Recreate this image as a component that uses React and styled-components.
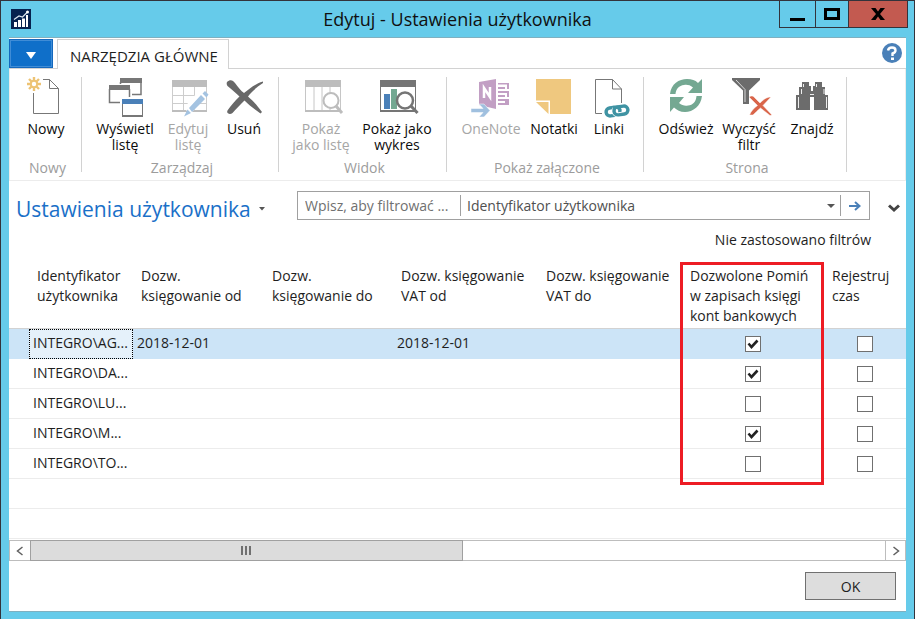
import React, { useState } from "react";
import styled, { createGlobalStyle } from "styled-components";

const Global = createGlobalStyle`
  * { box-sizing: border-box; }
  body { margin: 0; background: #66cbea; }
  body, button, input, select {
    font-family: "Open Sans", "Noto Sans", sans-serif;
    font-size: 14px;
    color: #1e1e1e;
  }
  button { cursor: pointer; }
`;

const Window = styled.div`
  min-height: 100vh;
  display: flex;
  flex-direction: column;
  padding: 0 8px 8px;
  background: #66cbea;
  border: 1px solid #33333b;
`;

const TitleBar = styled.header`
  display: grid;
  grid-template-columns: 127px 1fr 127px;
  height: 37px;
  border-bottom: 1px solid #7fb0c0;
`;

const AppLogo = styled.svg`
  margin: 8px 0 0 2px;
`;

const WindowTitle = styled.h1`
  margin: 0;
  text-align: center;
  font-size: 18px;
  font-weight: 400;
  line-height: 36px;
  color: #101010;
  white-space: nowrap;
`;

const WindowButtons = styled.div`
  display: flex;
  align-items: flex-start;
  margin-right: -2px;
`;

const WindowButton = styled.button`
  display: grid;
  place-items: center;
  flex: ${(p) => p.$grow} 1 0;
  height: 27px;
  padding: 0;
  border: 1px solid #33333b;
  border-width: 0 0 1px 1px;
  border-right-width: ${(p) => (p.$danger ? "1px" : 0)};
  background: ${(p) => (p.$danger ? "#c35a50" : "transparent")};
`;

const Client = styled.main`
  flex: 1;
  display: flex;
  flex-direction: column;
  background: #fff;
  border-bottom: 1px solid #7fb0c0;
`;

const TabStrip = styled.nav`
  display: flex;
  align-items: flex-start;
  height: 31px;
  padding-top: 1px;
  border-bottom: 1px solid #d2d2d2;
`;

const FileButton = styled.button`
  width: 44px;
  height: 29px;
  padding: 0;
  border: 1px solid #1468bd;
  background: #0f6fc9;
  box-shadow: inset 0 0 0 1px #3f8cd6;
`;

const RibbonTab = styled.button`
  height: 30px;
  margin-left: 4px;
  padding: 0 10px 0 12px;
  border: 1px solid #d2d2d2;
  border-bottom: 0;
  background: #fff;
  font-size: 15px;
  line-height: 32px;
  white-space: nowrap;
`;

const HelpButton = styled.button`
  margin: 4px 4px 0 auto;
  padding: 0;
  border: 0;
  background: none;
  height: 20px;
`;

const Ribbon = styled.section`
  display: flex;
  padding: 8px 0;
  border: 1px solid #ececec;
  border-top: 0;
`;

const RibbonGroup = styled.div`
  width: ${(p) => p.$width}px;
  height: 95px;
  display: flex;
  flex-direction: column;
  justify-content: space-between;
  border-right: 1px solid #d2d2d2;
`;

const GroupItems = styled.div`
  display: flex;
  padding-left: ${(p) => p.$indent}px;
`;

const GroupLabel = styled.div`
  margin-bottom: -6px;
  padding-left: 4px;
  text-align: center;
  line-height: 20px;
  color: #9c9c9c;
`;

const RibbonButton = styled.button`
  display: flex;
  flex-direction: column;
  align-items: center;
  width: ${(p) => p.$width}px;
  padding: 0;
  border: 0;
  background: none;
  color: #0c0c0c;
  line-height: 16px;

  &:disabled { color: #a6a6a6; cursor: default; }
`;

const RibbonIcon = styled.svg`
  width: 40px;
  height: 40px;
  margin-bottom: 4px;
  overflow: visible;
`;

const RibbonText = styled.span`
  white-space: pre;
  text-align: center;
`;

const PageHead = styled.div`
  display: flex;
  align-items: flex-start;
  padding: 10px 0 0 7px;
`;

const PageTitle = styled.h2`
  flex: 1;
  display: flex;
  align-items: center;
  gap: 8px;
  margin: 0;
  font-size: 21px;
  font-weight: 400;
  line-height: 36px;
  color: #1a70c8;
  white-space: nowrap;
`;

const FilterBox = styled.form`
  flex: 0 0 573px;
  display: flex;
  align-items: center;
  height: 29px;
  border: 1px solid #a0a0a0;
`;

const FilterInput = styled.input`
  width: 162px;
  height: 27px;
  padding: 0 7px;
  border: 0;
  background: none;
  &::placeholder { color: #707070; opacity: 1; }
`;

const FilterField = styled.div`
  flex: 1;
  display: flex;
  align-items: center;
  height: 21px;
  padding-right: 5px;
  border-left: 1px solid #a0a0a0;
  border-right: 1px solid #a0a0a0;
`;

const FieldSelect = styled.select`
  flex: 1;
  appearance: none;
  padding: 0 6px;
  border: 0;
  background: none;
  color: #505050;
`;

const IconButton = styled.button`
  display: grid;
  place-items: center;
  width: 28px;
  height: 27px;
  padding: 0;
  border: 0;
  background: none;
`;

const ExpandButton = styled(IconButton)`
  width: 24px;
  margin: 4px 0 0 12px;
`;

const FilterStatus = styled.p`
  margin: 0;
  padding: 3px 35px 12px 0;
  text-align: right;
  line-height: 20px;
`;

const Grid = styled.table`
  width: 100%;
  table-layout: fixed;
  border-collapse: separate;
  border-spacing: 0;
`;

const Col = styled.col`
  width: ${(p) => (p.$width ? `${p.$width}px` : "auto")};
`;

const HeadCell = styled.th`
  position: relative;
  padding: 4px 0 2px 8px;
  border-bottom: 1px solid #d2d2d2;
  text-align: left;
  vertical-align: top;
  font-weight: 400;
  line-height: 20px;
  white-space: pre;
`;

const Highlight = styled.span`
  position: absolute;
  top: 0;
  left: -2px;
  right: 0;
  height: calc(100% + 157px);
  border: 3px solid #ed1c24;
  pointer-events: none;
  z-index: 1;
`;

const Row = styled.tr`
  background: ${(p) => (p.$selected ? "#cce4f7" : "#fff")};
`;

const Cell = styled.td`
  height: 30px;
  padding: ${(p) => (p.$center ? "0" : "0 0 2px 4px")};
  border-bottom: 1px solid ${(p) => (p.$selected ? "#cce4f7" : "#ececec")};
  text-align: ${(p) => (p.$center ? "center" : "left")};
  line-height: 20px;
  white-space: nowrap;
`;

const FocusCell = styled(Cell)`
  background: #e5f1fa;
  outline: 1px dotted #000;
  outline-offset: -1px;
`;

const CheckBox = styled.input`
  appearance: none;
  display: block;
  width: 16px;
  height: 16px;
  margin: 0 auto;
  border: 1px solid #707070;
  background: #fff;

  &:checked {
    background: #fff url("data:image/svg+xml,%3Csvg xmlns='http://www.w3.org/2000/svg' viewBox='0 0 14 14'%3E%3Cpath d='M2.5 6.5L5.5 10L11.5 3.5' fill='none' stroke='%23222' stroke-width='2.6'/%3E%3C/svg%3E");
  }
`;

const ScrollBar = styled.div`
  display: flex;
  height: 21px;
  margin-top: 1px;
  border: 1px solid #bdbdbd;
`;

const ScrollArrow = styled.button`
  display: grid;
  place-items: center;
  width: 20px;
  padding: 0;
  border: 0;
  background: #fff;
  border-left: ${(p) => (p.$end ? "1px solid #bdbdbd" : 0)};
`;

const ScrollTrack = styled.div`
  flex: 1;
  margin: -1px 0;
`;

const ScrollThumb = styled.div`
  display: grid;
  place-items: center;
  width: 50.6%;
  height: 21px;
  border: 1px solid #a0a0a0;
  background: #dcdcdc;
`;

const Footer = styled.footer`
  display: flex;
  justify-content: flex-end;
  padding: 11px 10px;
`;

const OkButton = styled.button`
  width: 91px;
  height: 28px;
  padding: 0;
  border: 1px solid #707070;
  background: #dddddd;
`;

const G = "#777777";

const icons = {
  fresh: (
    <>
      <path d="M17 2.5H23.5L32.5 11.5V36.5H7.5V16M23.5 2.5V11.5H32.5" fill="none" stroke={G} />
      <path d="M8 0V14M1 7H15M3 2L13 12M13 2L3 12" stroke="#edc374" strokeWidth="2.4" />
      <circle cx="8" cy="7" r="3.2" fill="#fff" stroke="#edc374" strokeWidth="2" />
    </>
  ),
  view: (
    <>
      <path d="M15 1H37V6H15zM4 8H25V13H4z" fill={G} />
      <path d="M15.5 5V7M36 5V17.5H27M4.5 12V25.5H15M24.5 12V20" fill="none" stroke={G} strokeWidth="1.5" />
      <path d="M17.5 26V39H37.5V26" fill="#fff" stroke={G} />
      <path d="M17 39H38" stroke={G} strokeWidth="2" />
      <path d="M17 22H38V27H17z" fill="#4a80b8" />
    </>
  ),
  edit: (
    <>
      <path d="M4 3H39V10H4z" fill="#bdbdbd" />
      <path d="M4.5 10V34M15.5 10V34M26.5 10V34M38.5 10V34M4 18.5H39M4 26.5H39" stroke="#cdcdcd" />
      <path d="M4 34H39" stroke="#bdbdbd" strokeWidth="2" />
      <path d="M19 34L35 16" stroke="#fff" strokeWidth="9" />
      <path d="M21 31L33 18L37 22L24 35zM34.5 16.5L37 14L40.5 17.5L38.5 20.5zM19.5 32.5L23 36L16 39.5z" fill="#a4c3e1" />
    </>
  ),
  remove: (
    <path
      d="M3 5C6 2 9 3 11 6C14 10 17 14 20 16C26 11 31 7 39 4.500V6C33 10 28 14 24 19.500C29 24 33 28 38 35L36.500 36.500C30 32 25 28 20.500 23.500C16 28 12 32 8.500 36C6 38 2 36.500 3.500 33.500C7 28 11 24 15.500 19.500C11 15 7 12 3.500 9C2.500 8 2.500 6 3 5z"
      fill="#686868"
    />
  ),
  listView: (
    <>
      <path d="M4 3H40V10H4z" fill="#bdbdbd" />
      <path d="M4.5 10V34M39.5 10V34M13 10V33M21 10V33M29 10V33" stroke="#c6c6c6" />
      <path d="M4 34H40" stroke="#bdbdbd" strokeWidth="2" />
      <circle cx="30" cy="23.5" r="7.5" fill="#fff" stroke="#bdbdbd" strokeWidth="2" />
      <path d="M35 29L41 36" stroke="#bdbdbd" strokeWidth="3" />
    </>
  ),
  chartView: (
    <>
      <path d="M3 3H39V10H3z" fill="#757575" />
      <path d="M3.5 10V34M38.5 10V34" stroke={G} />
      <path d="M3 34H39" stroke="#757575" strokeWidth="2" />
      <path d="M7 17H13V32H7z" fill="#4a80b8" />
      <path d="M14 12H20V32H14z" fill="#74a892" />
      <circle cx="28" cy="23.5" r="8" fill="#fff" fillOpacity="0.9" stroke="#757575" strokeWidth="2.5" />
      <path d="M34 29L40.5 36" stroke="#757575" strokeWidth="3" />
    </>
  ),
  oneNote: (
    <>
      <path d="M8 5L25 2V32L8 28z" fill="#c29fc4" />
      <path d="M13 21V11L19 20V10" fill="none" stroke="#fff" strokeWidth="2.5" />
      <path d="M27 6H38V12H36V7.5H27zM27 10H34V12H27zM27 14H38V20H36V16H27zM27 18H34V20H27zM27 22H38V28H27V26H34V24H27z" fill="#c29fc4" />
      <path d="M0 31.5H12L8 27H13L19 33.5L13 40H8L12 35.5H0z" fill="#a0c0df" stroke="#fff" strokeWidth="0.5" />
    </>
  ),
  note: (
    <>
      <path d="M2 2H37V37H16V23.5H2z" fill="#efc87f" />
      <path d="M2 25H14.5V37z" fill="#efc87f" />
    </>
  ),
  link: (
    <>
      <path d="M13 36.5H6.5V2.5H23.5L32.5 12V26M23.5 2.5V12H32.5" fill="none" stroke={G} />
      <g transform="rotate(-8 28 34)" fill="none">
        <rect x="17" y="30" width="14" height="8" rx="4" stroke="#3f93a3" strokeWidth="3.4" />
        <rect x="25" y="30" width="14" height="8" rx="4" stroke="#fff" strokeWidth="5" />
        <rect x="25" y="30" width="14" height="8" rx="4" stroke="#3f93a3" strokeWidth="3.4" />
        <path d="M24 30H27Q31 30 31 33.5" stroke="#3f93a3" strokeWidth="3.4" />
      </g>
    </>
  ),
  refresh: (
    <g fill="#74a892">
      <path d="M4 17C5 7 13 2 21 2C26 2 29 3 32 6L36 2V16H22L27 10.5C24 8 21 7.5 18 8C13 8.5 10 12 9.5 17z" />
      <path d="M36 19C35 29 27 35 19 35C14 35 11 33 8 30.5L4 35V20H18L13 26C16 28.5 19 29 22 28.5C27 28 30 25 30.5 19z" />
    </g>
  ),
  clear: (
    <>
      <path d="M3 1H31V3L20 13.5V27H14V13.5L3 3z" fill="#6c6c6c" />
      <path d="M7 3L16 12.500V25" fill="none" stroke="#d8d8d8" strokeWidth="1" />
      <path
        d="M20 20C22 18.500 24 18.500 25 20L31 26C35 22 38 20 42 20L34 28.500L43 38L41 38.500L31.500 31C28 34 26 36 24 38H20.500C22 34 25 31 28.500 28.500z"
        fill="#d9654a"
        stroke="#fff"
        strokeWidth="0.5"
      />
    </>
  ),
  find: (
    <>
      <path d="M10 5H17V9H19V14H21V9H23V5H30V10H33V18H36V33H22V20H18V33H4V18H7V10H10z" fill="#6c6c6c" />
      <path d="M11.5 7V10M9.500 12V17M6.500 20V31M24.500 7V10M32 12V17M34.500 20V31M18 17.500H22" stroke="#eee" strokeWidth="1" />
    </>
  ),
};

const groups = [
  { label: "Nowy", width: 72, indent: 2, items: [["fresh", "Nowy", 68]] },
  {
    label: "Zarządzaj",
    width: 197,
    indent: 10,
    items: [
      ["view", "Wyświetl\nlistę", 66],
      ["edit", "Edytuj\nlistę", 60, true],
      ["remove", "Usuń", 52],
    ],
  },
  {
    label: "Widok",
    width: 168,
    indent: 4,
    items: [
      ["listView", "Pokaż\njako listę", 76, true],
      ["chartView", "Pokaż jako\nwykres", 76],
    ],
  },
  {
    label: "Pokaż załączone",
    width: 197,
    indent: 11,
    items: [
      ["oneNote", "OneNote", 66, true],
      ["note", "Notatki", 60],
      ["link", "Linki", 50],
    ],
  },
  {
    label: "Strona",
    width: 203,
    indent: 10,
    items: [
      ["refresh", "Odśwież", 64],
      ["clear", "Wyczyść\nfiltr", 62],
      ["find", "Znajdź", 64],
    ],
  },
];

const columns = [
  ["Identyfikator\nużytkownika", 104],
  ["Dozw.\nksięgowanie od", 131],
  ["Dozw.\nksięgowanie do", 129],
  ["Dozw. księgowanie\nVAT od", 145],
  ["Dozw. księgowanie\nVAT do", 144],
  ["Dozwolone Pomiń\nw zapisach księgi\nkont bankowych", 142, true],
  ["Rejestruj\nczas", 0],
];

const users = [
  { id: "INTEGRO\\AG...", from: "2018-12-01", vatFrom: "2018-12-01", skip: true },
  { id: "INTEGRO\\DA...", skip: true },
  { id: "INTEGRO\\LU...", skip: false },
  { id: "INTEGRO\\M...", skip: true },
  { id: "INTEGRO\\TO...", skip: false },
];

function UserRow({ user, selected }) {
  const [skip, setSkip] = useState(user.skip);
  const [time, setTime] = useState(false);
  const IdCell = selected ? FocusCell : Cell;
  return (
    <Row $selected={selected}>
      <Cell $selected={selected} />
      <IdCell $selected={selected}>{user.id}</IdCell>
      <Cell $selected={selected}>{user.from}</Cell>
      <Cell $selected={selected} />
      <Cell $selected={selected}>{user.vatFrom}</Cell>
      <Cell $selected={selected} />
      <Cell $selected={selected} $center>
        <CheckBox type="checkbox" aria-labelledby="col-5" checked={skip} onChange={() => setSkip(!skip)} />
      </Cell>
      <Cell $selected={selected} $center>
        <CheckBox type="checkbox" aria-labelledby="col-6" checked={time} onChange={() => setTime(!time)} />
      </Cell>
    </Row>
  );
}

export default function App() {
  return (
    <>
      <Global />
      <Window>
        <TitleBar>
          <AppLogo width="20" height="20" viewBox="0 0 20 20">
            <path d="M0 0H20V20H0z" fill="#06224f" />
            <path d="M3 13H6V18H3zM7 11H10V18H7zM11 9.500H14V18H11zM15 6H17V18H15z" fill="#fff" />
            <path d="M3 10.500L8 7L11.500 8L16.500 3" fill="none" stroke="#dce6f0" strokeWidth="1.200" />
            <circle cx="16.5" cy="3" r="1.5" fill="#fff" />
          </AppLogo>
          <WindowTitle>Edytuj - Ustawienia użytkownika</WindowTitle>
          <WindowButtons>
            <WindowButton $grow={36} aria-label="Minimalizuj">
              <svg width="16" height="14"><path d="M1 11H16V14H1z" fill="#000" /></svg>
            </WindowButton>
            <WindowButton $grow={33} aria-label="Maksymalizuj">
              <svg width="16" height="12"><path d="M1.500 1.500H14.500V10.500H1.500z" fill="none" stroke="#000" strokeWidth="3" /></svg>
            </WindowButton>
            <WindowButton $grow={60} $danger aria-label="Zamknij">
              <svg width="14" height="12"><path d="M0 0H4.500L7 3.500L9.500 0H14L9 6L14 12H9.500L7 8.500L4.500 12H0L5 6z" fill="#000" /></svg>
            </WindowButton>
          </WindowButtons>
        </TitleBar>

        <Client>
          <TabStrip>
            <FileButton aria-label="Menu aplikacji">
              <svg width="10" height="7"><path d="M0 0H10L5 7z" fill="#fff" /></svg>
            </FileButton>
            <RibbonTab>NARZĘDZIA GŁÓWNE</RibbonTab>
            <HelpButton aria-label="Pomoc">
              <svg width="20" height="20">
                <circle cx="10" cy="10" r="10" fill="#4a80b8" />
                <path d="M6 7.500Q6.500 4.500 10 4.500Q13.500 4.500 13.500 7.500Q13.500 9.500 10.500 10.500V13" fill="none" stroke="#fff" strokeWidth="2.400" />
                <path d="M9 14.500H12V17H9z" fill="#fff" />
              </svg>
            </HelpButton>
          </TabStrip>

          <Ribbon>
            {groups.map((g) => (
              <RibbonGroup key={g.label} $width={g.width}>
                <GroupItems $indent={g.indent}>
                  {g.items.map(([icon, text, width, off]) => (
                    <RibbonButton key={icon} $width={width} disabled={off}>
                      <RibbonIcon viewBox="0 0 40 40">{icons[icon]}</RibbonIcon>
                      <RibbonText>{text}</RibbonText>
                    </RibbonButton>
                  ))}
                </GroupItems>
                <GroupLabel>{g.label}</GroupLabel>
              </RibbonGroup>
            ))}
          </Ribbon>

          <PageHead>
            <PageTitle>
              Ustawienia użytkownika
              <svg width="6" height="4"><path d="M0 0H6L3 3.500z" fill="#555" /></svg>
            </PageTitle>
            <FilterBox onSubmit={(e) => e.preventDefault()}>
              <FilterInput aria-label="Filtr" placeholder="Wpisz, aby filtrować ..." />
              <FilterField>
                <FieldSelect aria-label="Pole filtru">
                  <option>Identyfikator użytkownika</option>
                </FieldSelect>
                <svg width="8" height="4"><path d="M0 0H8L4 4z" fill="#555" /></svg>
              </FilterField>
              <IconButton aria-label="Zastosuj filtr">
                <svg width="12" height="10"><path d="M0 5H10M6 1L10.500 5L6 9" fill="none" stroke="#4a80b8" strokeWidth="2" /></svg>
              </IconButton>
            </FilterBox>
            <ExpandButton aria-label="Rozwiń filtry">
              <svg width="12" height="9"><path d="M1 1.500L6 6L11 1.500" fill="none" stroke="#444" strokeWidth="3" /></svg>
            </ExpandButton>
          </PageHead>
          <FilterStatus>Nie zastosowano filtrów</FilterStatus>

          <Grid>
            <colgroup>
              <Col $width={20} />
              {columns.map(([name, width]) => <Col key={name} $width={width} />)}
            </colgroup>
            <thead>
              <tr>
                <HeadCell />
                {columns.map(([name, , marked], i) => (
                  <HeadCell key={name} id={`col-${i}`} scope="col">
                    {name}
                    {marked && <Highlight />}
                  </HeadCell>
                ))}
              </tr>
            </thead>
            <tbody>
              {users.map((u, i) => <UserRow key={u.id} user={u} selected={i === 0} />)}
              <Row><Cell colSpan={8} /></Row>
              <Row><Cell colSpan={8} /></Row>
            </tbody>
          </Grid>

          <ScrollBar>
            <ScrollArrow aria-label="Przewiń w lewo">
              <svg width="8" height="10"><path d="M6.500 1L1.500 5L6.500 9" fill="none" stroke="#606060" strokeWidth="1.500" /></svg>
            </ScrollArrow>
            <ScrollTrack>
              <ScrollThumb>
                <svg width="10" height="9"><path d="M0 0H2V9H0zM4 0H6V9H4zM8 0H10V9H8z" fill="#707070" /></svg>
              </ScrollThumb>
            </ScrollTrack>
            <ScrollArrow $end aria-label="Przewiń w prawo">
              <svg width="8" height="10"><path d="M1.500 1L6.500 5L1.500 9" fill="none" stroke="#606060" strokeWidth="1.500" /></svg>
            </ScrollArrow>
          </ScrollBar>

          <Footer>
            <OkButton>OK</OkButton>
          </Footer>
        </Client>
      </Window>
    </>
  );
}
